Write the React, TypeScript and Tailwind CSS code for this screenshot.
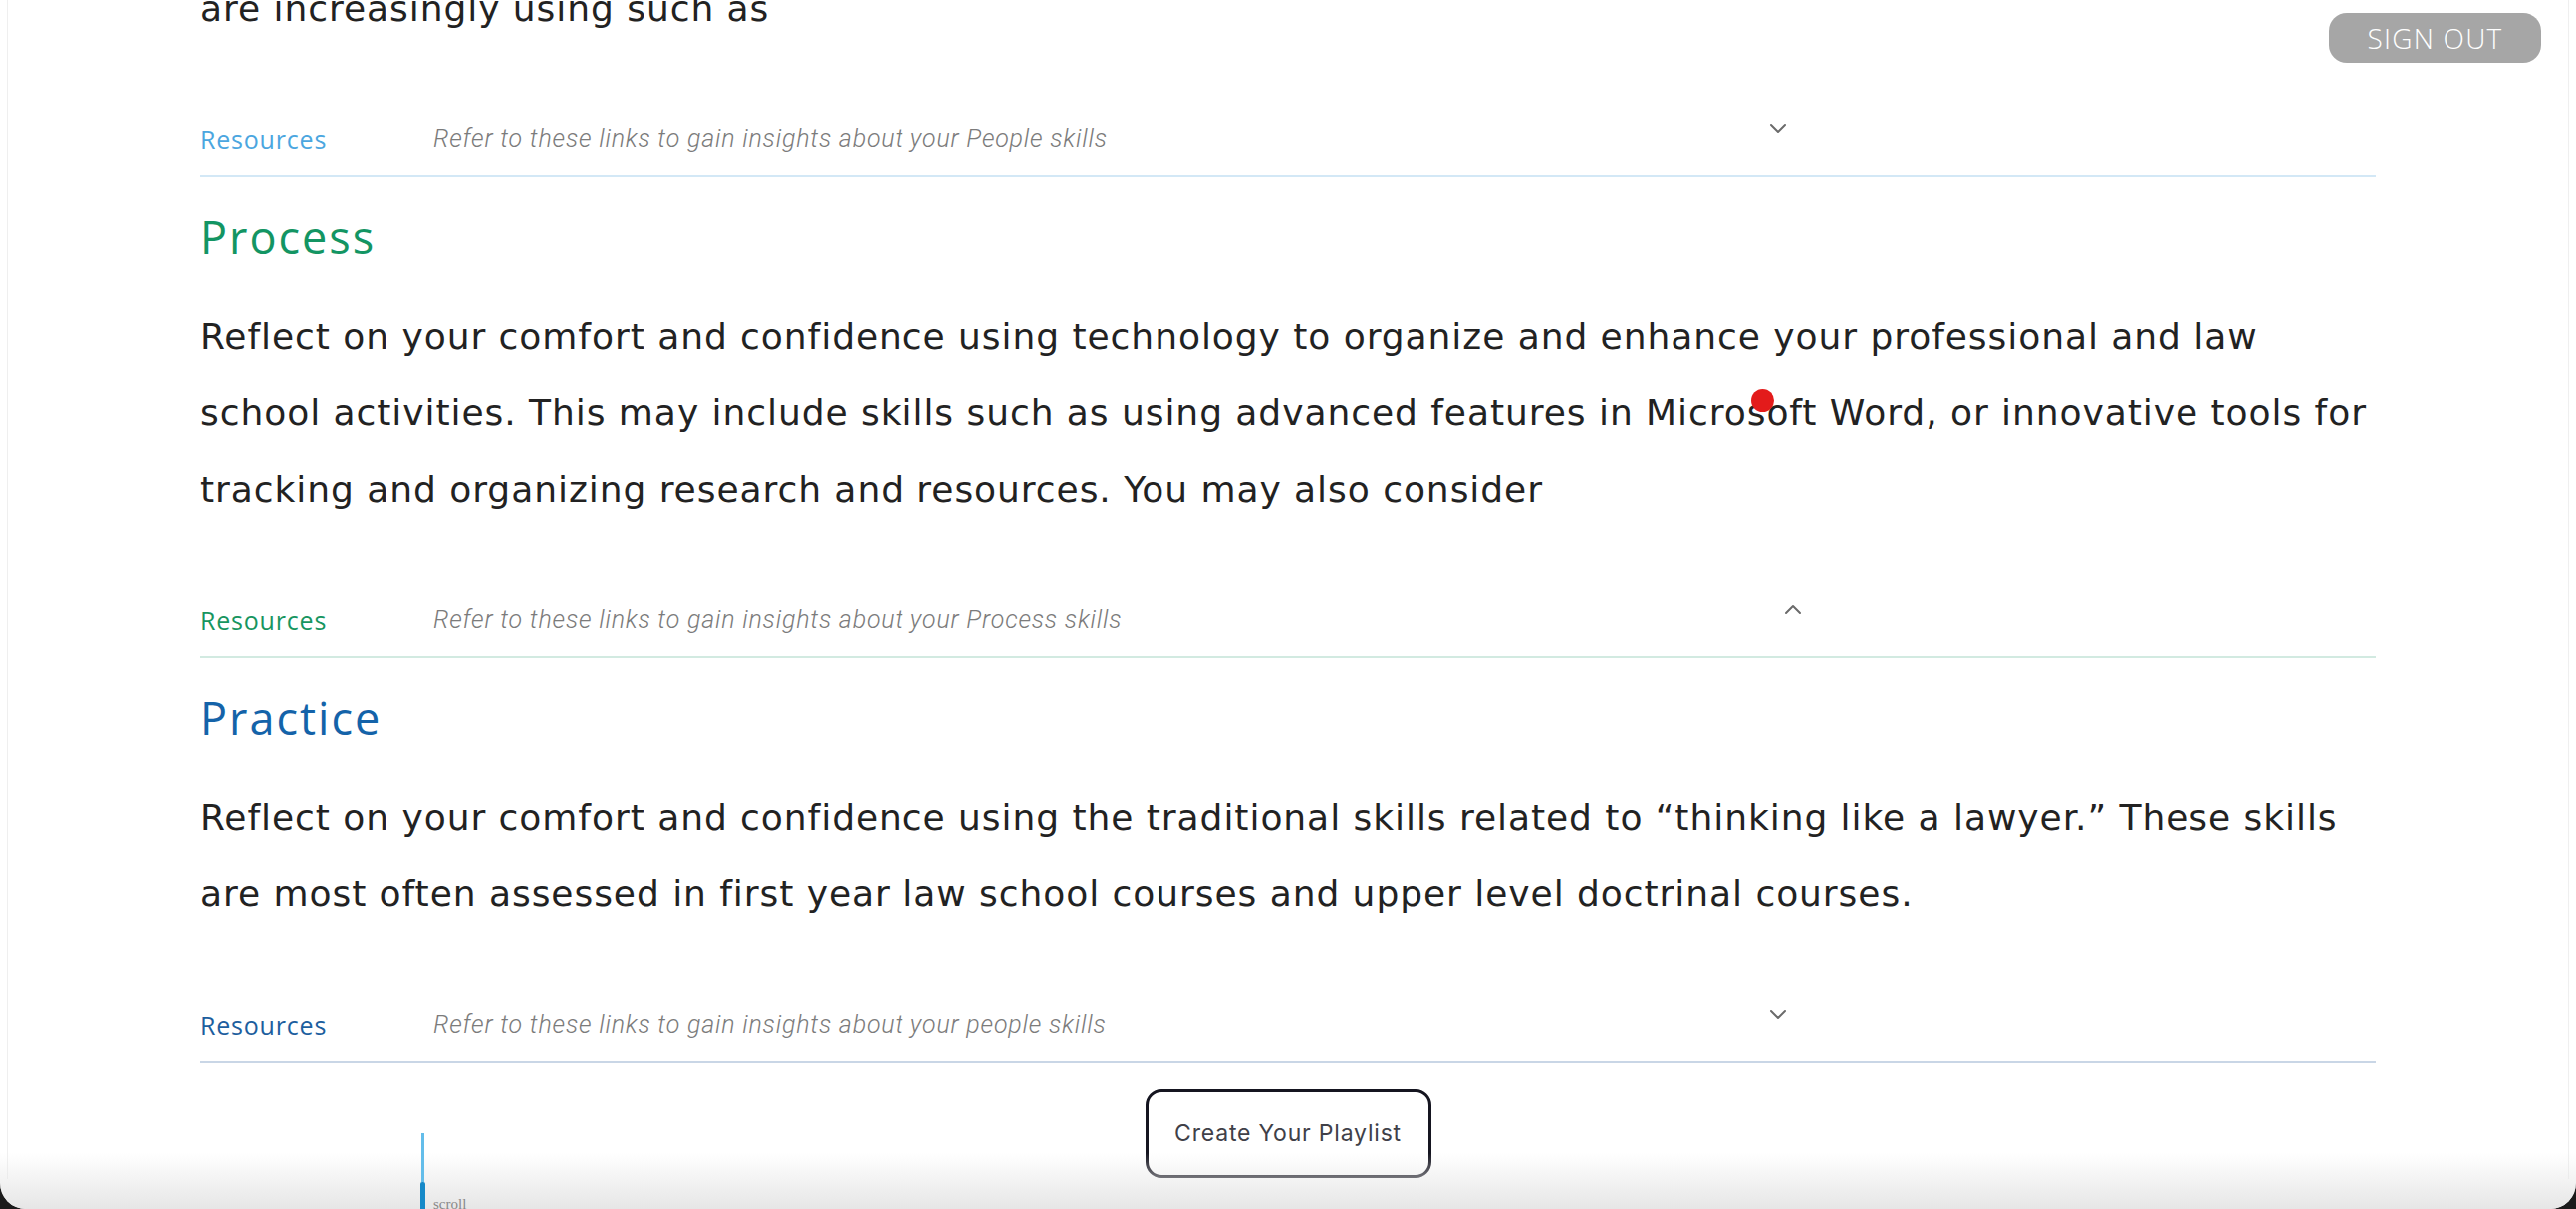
import React from "react";

type Row = {
  label: string;
  labelColor: string;
  line: string;
  desc: string;
  open?: boolean;
};

function Chevron({ open }: { open?: boolean }) {
  return (
    <svg
      width="20"
      height="12"
      viewBox="0 0 20 12"
      className={open ? "ml-[15px] -translate-y-[11px]" : "-translate-y-[11px]"}
      fill="none"
      stroke="#6b6b6b"
      strokeWidth="2"
      strokeLinecap="round"
      strokeLinejoin="round"
    >
      {open ? <polyline points="3,10 10,3 17,10" /> : <polyline points="3,3 10,10 17,3" />}
    </svg>
  );
}

function ResourceRow({ row }: { row: Row }) {
  return (
    <div className={"mt-[78px] flex items-center pb-[21px] border-b-2 " + row.line}>
      <span
        className={
          "w-[234px] text-[25px] leading-[30px] tracking-[0.8px] font-[family-name:'Open_Sans',sans-serif] " +
          row.labelColor
        }
      >
        {row.label}
      </span>
      <span className="w-[1340px] text-[25px] leading-[30px] tracking-[0.8px] italic font-light text-[#7b7b7b] font-[family-name:Roboto,sans-serif]">
        {row.desc}
      </span>
      <Chevron open={row.open} />
    </div>
  );
}

function Heading({ children, color }: { children: React.ReactNode; color: string }) {
  return (
    <h2
      className={
        "mt-[30px] text-[45px] leading-[60px] tracking-[2px] font-[family-name:'Open_Sans',sans-serif] " + color
      }
    >
      {children}
    </h2>
  );
}

function Para({ children }: { children: React.ReactNode }) {
  return <p className="mt-[31px] text-[36px] leading-[77px] tracking-[0.95px]">{children}</p>;
}

export default function App() {
  return (
    <div className="relative h-[1214px] w-full overflow-hidden bg-[#1b1b1b]">
      <div className="relative h-full overflow-hidden rounded-b-[26px] bg-white">
        <div className="h-full mx-[7px] border-x border-[#efefef]">
          <main className="mx-auto w-[2184px] text-[#222] font-[family-name:'DejaVu_Sans',sans-serif]">
            <p className="-mt-[30px] text-[36px] leading-[77px] tracking-[0.95px]">are increasingly using such as</p>
            <ResourceRow
              row={{
                label: "Resources",
                labelColor: "text-[#4ba6df]",
                line: "border-[#d3e8f6]",
                desc: "Refer to these links to gain insights about your People skills",
              }}
            />

            <Heading color="text-[#139563]">Process</Heading>
            <Para>
              Reflect on your comfort and confidence using technology to organize and enhance your professional and law
              <br />
              school activities. This may include skills such as using advanced features in Microsoft Word, or
              innovative tools for
              <br />
              tracking and organizing research and resources. You may also consider
            </Para>
            <ResourceRow
              row={{
                label: "Resources",
                labelColor: "text-[#17955f]",
                line: "border-[#d2eae1]",
                desc: "Refer to these links to gain insights about your Process skills",
                open: true,
              }}
            />

            <Heading color="text-[#1463a9]">Practice</Heading>
            <Para>
              Reflect on your comfort and confidence using the traditional skills related to “thinking like a lawyer.”
              These skills
              <br />
              are most often assessed in first year law school courses and upper level doctrinal courses.
            </Para>
            <ResourceRow
              row={{
                label: "Resources",
                labelColor: "text-[#1c5e9e]",
                line: "border-[#c9d6e6]",
                desc: "Refer to these links to gain insights about your people skills",
              }}
            />

            <div className="mt-[27px] flex justify-center">
              <button className="h-[89px] w-[287px] rounded-[16px] border-[3px] border-[#151520] bg-white text-[23px] tracking-[0.8px] text-[#404048] font-[family-name:Inter,sans-serif]">
                Create Your Playlist
              </button>
            </div>
          </main>
        </div>

        {/* fixed overlays */}
        <button className="absolute right-[35px] top-[13px] h-[50px] w-[213px] rounded-[18px] bg-[#a6a6a6] text-[28px] font-light tracking-[1.2px] text-white font-[family-name:'Open_Sans',sans-serif]">
          SIGN OUT
        </button>

        <div className="absolute left-[1758px] top-[391px] h-[23px] w-[23px] rounded-full bg-[#e31b1b]" />

        <div className="pointer-events-none absolute inset-x-0 bottom-0 h-[56px] bg-linear-to-b from-white/0 to-[#e6e6e6]" />

        <div className="absolute z-10 left-[422px] top-[1138px] flex items-start gap-[8px]">
          <div className="flex flex-col items-center">
            <div className="h-[49px] w-[3px] bg-[#63bdea]" />
            <div className="h-[30px] w-[5px] rounded-[2px] bg-[#1689c8]" />
          </div>
          <span className="mt-[62px] text-[15px] leading-[18px] text-[#888] font-[family-name:'Liberation_Serif',serif]">
            scroll
          </span>
        </div>
      </div>
    </div>
  );
}
